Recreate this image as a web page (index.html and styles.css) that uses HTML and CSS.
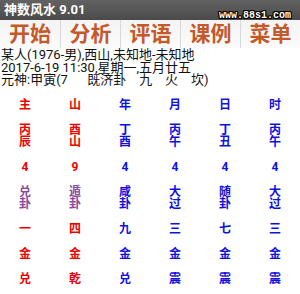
FILE: index.html
```html
<!DOCTYPE html>
<html>
<head>
<meta charset="utf-8">
<link rel="stylesheet" href="styles.css">
</head>
<body>
<div class="titlebar">神数风水 9.01</div>
<div class="watermark">www.88s1.com</div>
<nav class="tabs">
  <div class="tab">开始</div>
  <div class="tab">分析</div>
  <div class="tab">评语</div>
  <div class="tab">课例</div>
  <div class="tab">菜单</div>
</nav>
<div class="info">
  <div class="line">某人(1976-男),西山,未知地-未知地</div>
  <div class="line">2017-6-19 11:30,星期一,五月廿五</div>
  <div class="line">元神:甲寅(7      既济卦    九    火    坎)</div>
</div>
<div class="grid">
  <div class="r">主</div><div class="r">山</div><div class="b">年</div><div class="b">月</div><div class="b">日</div><div class="b">时</div>
  <div class="r">丙<br>辰</div><div class="r">酉<br>山</div><div class="b">丁<br>酉</div><div class="b">丙<br>午</div><div class="b">丁<br>丑</div><div class="b">丙<br>午</div>
  <div class="r">4</div><div class="r">9</div><div class="b">4</div><div class="b">4</div><div class="b">4</div><div class="b">4</div>
  <div class="p">兑<br>卦</div><div class="p">遁<br>卦</div><div class="b">咸<br>卦</div><div class="b">大<br>过</div><div class="b">随<br>卦</div><div class="b">大<br>过</div>
  <div class="r">一</div><div class="r">四</div><div class="b">九</div><div class="b">三</div><div class="b">七</div><div class="b">三</div>
  <div class="r">金</div><div class="r">金</div><div class="b">金</div><div class="b">金</div><div class="b">金</div><div class="b">金</div>
  <div class="r">兑</div><div class="r">乾</div><div class="b">兑</div><div class="b">震</div><div class="b">震</div><div class="b">震</div>
</div>
</body>
</html>
```
FILE: styles.css
```css
html, body {
  margin: 0;
  padding: 0;
  background: #ffffff;
  width: 300px;
  height: 294px;
  overflow: hidden;
  font-family: Roboto, "Noto Sans CJK SC", sans-serif;
}
body { position: relative; }

.titlebar {
  height: 20px;
  background: linear-gradient(#626262, #4a4a4a);
  color: #ffffff;
  font-size: 13px;
  line-height: 20px;
  padding-left: 4px;
  font-weight: bold;
}

.watermark {
  position: absolute;
  top: 10px;
  right: 9px;
  font-family: "Liberation Mono", monospace;
  font-weight: bold;
  font-size: 10px;
  line-height: 12px;
  color: #ffffff;
  text-shadow: 1px 0 0 #000, -1px 0 0 #000, 0 1px 0 #000, 0 -1px 0 #000,
               1px 1px 0 #000, -1px -1px 0 #000, 1px -1px 0 #000, -1px 1px 0 #000;
}

.tabs {
  display: flex;
  height: 28px;
  background: linear-gradient(#f4f4f4, #fbfbfb);
}
.tab {
  width: 60px;
  text-align: center;
  font-size: 21px;
  line-height: 28px;
  font-weight: bold;
  color: #c4592a;
  border-left: 1px solid #d9d9d9;
  box-sizing: border-box;
}
.tab:first-child { border-left: none; }

.info {
  padding-left: 1px;
  padding-top: 1px;
  font-size: 13px;
  line-height: 12.5px;
  color: #111111;
}
.line { white-space: pre; }

.grid {
  display: grid;
  grid-template-columns: repeat(6, 50px);
  row-gap: 13px;
  margin-top: 12px;
  font-size: 12px;
  line-height: 12px;
  font-weight: bold;
  text-align: center;
}
.r { color: #ee0000; }
.b { color: #1010e0; }
.p { color: #8c4a9c; }
```
